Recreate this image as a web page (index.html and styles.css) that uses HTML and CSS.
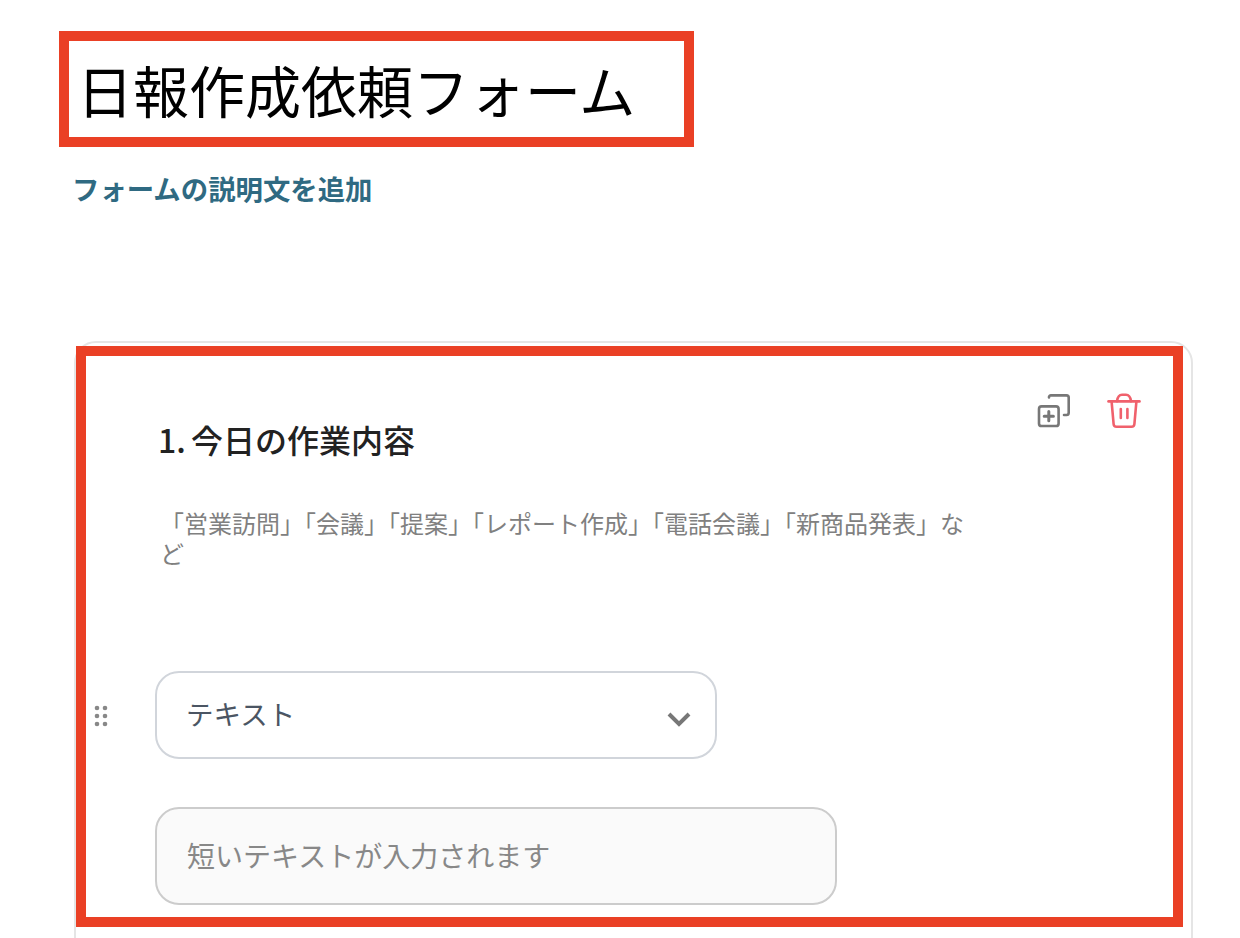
FILE: index.html
```html
<!DOCTYPE html>
<html lang="ja">
<head>
<meta charset="utf-8">
<title>日報作成依頼フォーム</title>
<link rel="stylesheet" href="styles.css">
</head>
<body>
<main class="page">
  <div class="title-mark"><h1 class="form-title">日報作成依頼フォーム</h1></div>
  <a class="form-desc">フォームの説明文を追加</a>
  <section class="card">
    <div class="card-mark">
      <div class="head">
        <h2 class="q-title">1. 今日の作業内容</h2>
        <div class="actions">
          <svg class="icon-copy" width="34" height="34" viewBox="0 0 34 34" fill="none" stroke="#777" stroke-width="2.6" stroke-linecap="round" stroke-linejoin="round">
            <path d="M12 3.5V3a1.8 1.8 0 0 1 2-1.6h15.5a2.2 2.2 0 0 1 2.2 2.2v15.2a2.2 2.2 0 0 1-2.2 2.2H27"/>
            <rect x="2" y="12.4" width="19.6" height="19.6" rx="2.6"/>
            <path d="M11.8 17.6v9.2M7.2 22.2h9.2" stroke-width="3"/>
          </svg>
          <svg class="icon-trash" width="34" height="36" viewBox="0 0 34 36" fill="none" stroke="#f0616c" stroke-width="2.6" stroke-linecap="round" stroke-linejoin="round">
            <path d="M1.5 8.4h31"/>
            <path d="M10 8.2c.6-4.2 2.6-6.4 5-6.4h4c2.4 0 4.400 2.200 5 6.400"/>
            <path d="M4.600 8.600l2 22.400a3 3 0 0 0 3 2.800h14.800a3 3 0 0 0 3-2.800l2-22.400"/>
            <path d="M13.800 16v9M20.400 16v9"/>
          </svg>
        </div>
      </div>
      <p class="q-help">「営業訪問」「会議」「提案」「レポート作成」「電話会議」「新商品発表」など</p>
      <div class="type-row">
        <svg class="drag" width="14" height="22" viewBox="0 0 14 22" fill="#888">
          <circle cx="3" cy="3" r="2.300"/><circle cx="11" cy="3" r="2.300"/>
          <circle cx="3" cy="11" r="2.300"/><circle cx="11" cy="11" r="2.300"/>
          <circle cx="3" cy="19" r="2.300"/><circle cx="11" cy="19" r="2.300"/>
        </svg>
        <div class="select">
          <span>テキスト</span>
          <svg class="chevron" width="24" height="16" viewBox="0 0 24 16" fill="none" stroke="#777" stroke-width="4">
            <path d="M2 3l10 10L22 3"/>
          </svg>
        </div>
      </div>
      <div class="input">短いテキストが入力されます</div>
    </div>
  </section>
</main>
</body>
</html>
```
FILE: styles.css
```css
html, body {
  margin: 0;
  height: 938px;
  overflow: hidden;
  background: #fff;
}
body {
  font-family: "Noto Sans CJK JP", "Noto Sans", sans-serif;
}
.page {
  display: flex;
  flex-direction: column;
  align-items: flex-start;
  padding: 31px 47px 0 59px;
}
.title-mark {
  box-sizing: border-box;
  width: 635px;
  height: 116px;
  border: 10px solid #ea4025;
  padding-left: 8px;
  display: flex;
  align-items: center;
}
.form-title {
  margin: 0;
  font-size: 56px;
  font-weight: 400;
  line-height: 80px;
  color: #000;
  white-space: nowrap;
}
.form-desc {
  margin: 22px 0 0 13px;
  font-size: 27.400px;
  font-weight: 600;
  line-height: 38px;
  color: #2f6a82;
}
.card {
  box-sizing: border-box;
  width: 1119px;
  height: 620px;
  margin: 134px 0 0 15px;
  border: 2px solid #e5e5e5;
  border-radius: 22px;
  padding: 3px 8px 0 0;
}
.card-mark {
  box-sizing: border-box;
  height: 581px;
  border: 10px solid #ea4025;
  padding: 37px 32px 0 8px;
}
.head {
  display: flex;
  justify-content: space-between;
  align-items: flex-start;
}
.q-title {
  margin: 24px 0 0 64px;
  font-size: 32px;
  font-weight: 500;
  word-spacing: -2px;
  line-height: 44px;
  color: #222;
}
.actions {
  display: flex;
  align-items: flex-start;
  gap: 36px;
}
.icon-copy {
  margin-top: 1px;
}
.q-help {
  width: 810px;
  margin: 47px 0 0 66px;
  font-size: 24px;
  line-height: 30px;
  color: #808080;
}
.type-row {
  display: flex;
  align-items: center;
  gap: 47px;
  margin-top: 103px;
}
.drag {
  margin-top: 2px;
}
.select {
  box-sizing: border-box;
  width: 562px;
  height: 88px;
  border: 2px solid #d1d5db;
  border-radius: 24px;
  padding: 0 24px 5px 29px;
  display: flex;
  align-items: center;
  justify-content: space-between;
  font-size: 27.500px;
  color: #4b5563;
}
.chevron {
  margin-top: 13px;
}
.input {
  box-sizing: border-box;
  width: 682px;
  height: 98px;
  margin: 48px 0 0 61px;
  border: 2px solid #ccc;
  border-radius: 24px;
  background: #fafafa;
  padding: 0 0 3px 30px;
  display: flex;
  align-items: center;
  font-size: 28px;
  color: #888;
}
```
